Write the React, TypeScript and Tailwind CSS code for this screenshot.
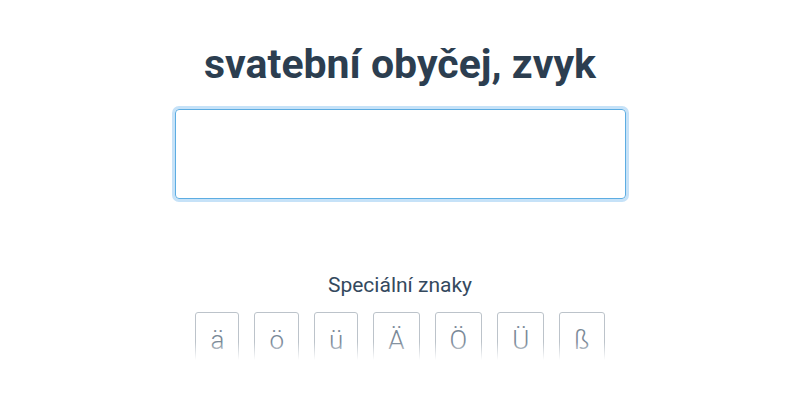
const CHARS = ["ä", "ö", "ü", "Ä", "Ö", "Ü", "ß"];

export default function App() {
  return (
    <main
      className="w-[800px] h-[400px] bg-white flex flex-col items-center overflow-hidden"
      style={{ fontFamily: "Roboto, 'Noto Sans', sans-serif" }}
    >
      <h1 className="mt-[38px] text-[41px] leading-[52px] font-bold text-[#2c3e50]">
        svatební obyčej, zvyk
      </h1>

      <input
        type="text"
        className="mt-[19px] w-[451px] h-[90px] rounded-[4px] border border-[#5dade2] ring-[3px] ring-[#c6e2f8] outline-none px-3 text-[24px] text-[#2c3e50]"
      />

      <p className="mt-[72px] text-[21px] leading-[28px] text-[#34495e]">Speciální znaky</p>

      {/* Special character keys, fading out at the bottom */}
      <div className="relative mt-[13px] h-[48px] overflow-hidden">
        <div className="flex gap-[15px]">
          {CHARS.map((c) => (
            <button
              key={c}
              className="h-[64px] px-[14px] pt-[12px] rounded-[3px] border border-[#bcc3ca] bg-white text-[26px] leading-[30px] font-light text-[#7a8998] flex items-start justify-center"
            >
              {c}
            </button>
          ))}
        </div>
        <div className="pointer-events-none absolute inset-x-0 bottom-0 h-[18px] bg-gradient-to-b from-transparent to-white" />
      </div>
    </main>
  );
}
